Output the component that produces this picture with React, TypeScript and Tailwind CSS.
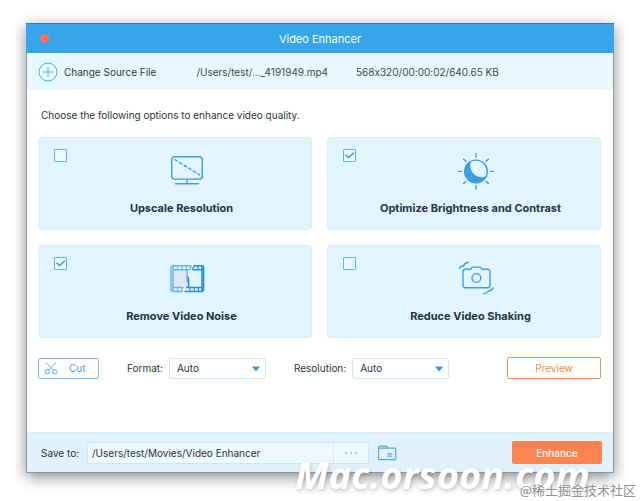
import React, { useState } from 'react';

// ---------------------------------------------------------------------------
// Icons
// ---------------------------------------------------------------------------

const MonitorIcon = () => (
  <svg width="38" height="38" viewBox="0 0 38 38" fill="none" stroke="#3a9fe0" strokeWidth="1.4" strokeLinecap="round">
    <rect x="3.7" y="4.7" width="30.6" height="22.4" rx="2.8" />
    <path d="M7 7.6L31.5 22.8" strokeDasharray="2.6 2.8" />
    <path d="M19 27.2v4.3M7.6 31.7h23" />
  </svg>
);

const BrightnessIcon = () => (
  <svg width="38" height="38" viewBox="0 0 38 38" fill="none" stroke="#3a9fe0" strokeWidth="1.4">
    <circle cx="19" cy="19.4" r="11.3" />
    <path
      d="M13.9 9.4A11.3 11.3 0 1 0 29.2 24.2C25.4 26 20 25.4 16.6 21.8C13.1 18.2 12.5 13.2 13.9 9.4z"
      fill="#3a9fe0"
      stroke="none"
    />
    <path d="M19 1.2v4.2M19 33.2v4.2M1 19.4h4.2M32.8 19.4H37M6.3 6.7l3 3M28.8 29l3 3M31.7 6.7l-3 3M9.2 29l-3 3" />
  </svg>
);

const FilmIcon = () => (
  <svg width="38" height="38" viewBox="0 0 38 38" fill="none">
    <rect x="5" y="9" width="14" height="19" fill="#dde9f4" />
    <g stroke="#6bb3e6" strokeWidth="1.4">
      <path d="M23 5.7H5.2A2.2 2.2 0 0 0 3 7.9v21.4a2.2 2.2 0 0 0 2.2 2.2h9.3M5 9.7h16.5M5 27.5h10.5M5 6v25" />
      <path d="M9.5 5.7v4M14 5.7v4M18.5 5.7v4M9.5 27.5v4M14 27.5v4" strokeWidth="1.1" />
      <path d="M23.4 5.7l-1.8 4M19 9.7v10l.8 3" />
    </g>
    <g stroke="#2190e4" strokeWidth="1.5">
      <path d="M26 5.7h7.4a2.2 2.2 0 0 1 2.2 2.2v21.4a2.2 2.2 0 0 1-2.2 2.2H16.5M24.6 9.7h9.8M18 27.5h16.4M34 6v25" />
      <path d="M26 5.7l-1.4 4M30 5.7v4M22 27.5v4M26.2 27.5v4M30.4 27.5v4" strokeWidth="1.2" />
      <path d="M20.6 27.5v-8.3l-.8-2.6" />
    </g>
  </svg>
);

const CameraIcon = () => (
  <svg width="38" height="38" viewBox="0 0 38 38" fill="none" stroke="#3a9fe0" strokeWidth="1.4" strokeLinecap="round" strokeLinejoin="round">
    <path d="M8.6 9.2h5l1.7-2.1h8l1.7 2.1h5.4a2.6 2.6 0 0 1 2.6 2.6v13.4a2.6 2.6 0 0 1-2.6 2.6H8.6A2.6 2.6 0 0 1 6 25.2V11.8A2.6 2.6 0 0 1 8.6 9.2z" />
    <circle cx="19.4" cy="18" r="4.4" />
    <path d="M2.4 8c1.6-2 2.6-2.1 4-1.9c1.4-2.7 2.8-3.6 5-3.9" />
    <path d="M27 33.7c2.2-.2 3.4-.9 4.4-2.7c2.4-.2 3.5-1.2 4.8-3" />
  </svg>
);

const PlusCircleIcon = () => (
  <svg width="20" height="20" viewBox="0 0 20 20" fill="none" stroke="#4fb3dc" strokeWidth="1">
    <circle cx="10" cy="10" r="9" />
    <path d="M10 5v10M5 10h10" />
  </svg>
);

const ScissorsIcon = () => (
  <svg width="14" height="14" viewBox="0 0 14 14" fill="none" stroke="#5fb2e4" strokeWidth="1">
    <circle cx="3.3" cy="10.7" r="2.2" />
    <circle cx="10.7" cy="10.7" r="2.2" />
    <path d="M1.6 1.4L9.4 8.9M12.4 1.4L4.6 8.9" />
  </svg>
);

const FolderIcon = () => (
  <svg width="20" height="16" viewBox="0 0 20 16" fill="none" stroke="#55aae6" strokeWidth="1.2">
    <path d="M1.6 13.4V2.6a1.4 1.4 0 0 1 1.4-1.4h6.4l1.6 2h6.8a1 1 0 0 1 1 1v9.4a1 1 0 0 1-1 1H2.8a1.2 1.2 0 0 1-1.2-1.2z" />
    <path d="M2 3.2h9M10.2 8.8h5M10.2 11.2h5" />
  </svg>
);

// ---------------------------------------------------------------------------
// Enhancement options
// ---------------------------------------------------------------------------

const OPTIONS: { id: string; title: string; icon: React.ReactNode; checked: boolean }[] = [
  { id: 'upscale',    title: 'Upscale Resolution',               icon: <MonitorIcon />,    checked: false },
  { id: 'brightness', title: 'Optimize Brightness and Contrast', icon: <BrightnessIcon />, checked: true  },
  { id: 'noise',      title: 'Remove Video Noise',               icon: <FilmIcon />,       checked: true  },
  { id: 'shaking',    title: 'Reduce Video Shaking',             icon: <CameraIcon />,     checked: false },
];

function OptionCard({ id, title, icon, checked }: { id: string; title: string; icon: React.ReactNode; checked: boolean }) {
  const [on, setOn] = useState(checked);

  return (
    <label htmlFor={id} className="flex rounded-sm border border-[#d9effb] bg-[#e2f4fe] px-[15px] pt-[11px] pb-[13px]">
      <span className="relative h-[13px] w-[13px] shrink-0">
        <input
          id={id}
          type="checkbox"
          checked={on}
          onChange={(e) => setOn(e.target.checked)}
          className="block h-[13px] w-[13px] appearance-none rounded-[1px] border border-[#62b4e8] bg-[#eef9ff]"
        />
        {on && (
          <svg className="pointer-events-none absolute inset-0" width="13" height="13" viewBox="0 0 13 13" fill="none" stroke="#2f9be0" strokeWidth="1.4">
            <path d="M2.5 5.8l3.1 2.8l5.2-4.8" />
          </svg>
        )}
      </span>
      <span className="flex flex-1 flex-col items-center gap-2.5 pt-[3px]">
        <span className="pl-2.5">{icon}</span>
        <span className="text-[11px] leading-4 font-bold text-[#26343d]">{title}</span>
      </span>
    </label>
  );
}

function AutoSelect({ id, label }: { id: string; label: string }) {
  return (
    <div className="flex items-center gap-1.5">
      <label htmlFor={id}>{label}</label>
      <div className="relative">
        <select
          id={id}
          className="block h-[21px] w-[97px] appearance-none rounded-xs border border-[#cfe9f4] bg-white pl-[7px] text-[10px] text-[#2b3338]"
        >
          <option>Auto</option>
        </select>
        <svg className="pointer-events-none absolute top-2 right-1.5" width="8" height="6" viewBox="0 0 8 6" fill="#2b97dc">
          <path d="M0 .5h8L4 5.5z" />
        </svg>
      </div>
    </div>
  );
}

// ---------------------------------------------------------------------------
// Window
// ---------------------------------------------------------------------------

export default function App() {
  return (
    <div className="relative min-h-screen overflow-hidden bg-white px-[26px] pt-[23px] pb-[29px] font-['Inter','Noto_Sans_CJK_SC',sans-serif] text-[10px] leading-4 text-[#2b3338]">
      <main className="border border-[#8b969c] bg-white shadow-[0_4px_14px_rgba(0,0,0,0.45)]">
        <header className="relative -mx-px -mt-px flex h-[30px] items-center justify-center border-t border-[#44789a] bg-[#38a5ea]">
          <button aria-label="Close" className="absolute left-3.5 h-[9px] w-[9px] rounded-full bg-[#fc7168]" />
          <h1 className="text-[11px] text-white">Video Enhancer</h1>
        </header>

        {/* Source file */}
        <section className="flex h-[37px] items-center bg-[#e9f7fe] pl-[11px]">
          <button className="flex items-center gap-1.5 text-[#2d383e]">
            <PlusCircleIcon />
            Change Source File
          </button>
          <span className="ml-10 text-[#3c4a51]">/Users/test/..._4191949.mp4</span>
          <span className="ml-7 text-[#3c4a51] [font-feature-settings:'calt'_0]">568x320/00:00:02/640.65 KB</span>
        </section>

        {/* Options */}
        <section className="pr-3 pl-[11px]">
          <p className="px-[3px] pt-[17px] pb-3.5">Choose the following options to enhance video quality.</p>
          <div className="grid grid-cols-2 gap-[15px]">
            {OPTIONS.map((option) => (
              <OptionCard key={option.id} {...option} />
            ))}
          </div>

          <div className="flex items-center pt-[19px] pb-[53px]">
            <button className="flex h-[21px] w-[61px] items-center gap-[11px] rounded-xs border border-[#7fc0ea] pl-[5px] text-[#45a5e4]">
              <ScissorsIcon />
              Cut
            </button>
            <div className="flex gap-7 pl-7">
              <AutoSelect id="format" label="Format:" />
              <AutoSelect id="resolution" label="Resolution:" />
            </div>
            <button className="ml-auto h-[22px] w-[94px] rounded-xs border border-[#f5924f] text-[#f2893f]">
              Preview
            </button>
          </div>
        </section>

        {/* Output */}
        <footer className="flex h-10 items-center border-t border-[#d6ecf8] bg-[#e2f2fd] pr-[11px] pl-3.5">
          <label htmlFor="save-to" className="mr-2">Save to:</label>
          <div className="flex h-[22px] w-[282px] rounded-xs border border-[#cde7f5] bg-[#edf8ff]">
            <input
              id="save-to"
              type="text"
              defaultValue="/Users/test/Movies/Video Enhancer"
              className="min-w-0 flex-1 bg-transparent px-1 outline-none"
            />
            <button aria-label="Browse" className="flex w-[35px] items-center justify-center border-l border-[#dcedf7]">
              <svg width="14" height="4" viewBox="0 0 14 4" fill="#3e98d4">
                <circle cx="2" cy="2" r=".8" />
                <circle cx="7" cy="2" r=".8" />
                <circle cx="12" cy="2" r=".8" />
              </svg>
            </button>
          </div>
          <button aria-label="Open folder" className="ml-2">
            <FolderIcon />
          </button>
          <button className="ml-auto h-[23px] w-[90px] rounded-xs bg-[#fc8450] font-medium text-white">
            Enhance
          </button>
        </footer>
      </main>

      {/* Site marks over the bottom edge */}
      <span className="pointer-events-none absolute right-[50px] bottom-2 font-['Noto_Sans',sans-serif] text-[38px] leading-10 font-bold text-white italic [text-shadow:1px_2px_4px_rgba(0,0,0,0.2)]">
        Mac.orsoon.com
      </span>
      <span className="pointer-events-none absolute right-1 bottom-1 font-['Noto_Sans_CJK_SC',sans-serif] text-[13px] leading-4 text-[#8f9295] [text-shadow:0_0_2px_#fff]">
        @稀土掘金技术社区
      </span>
    </div>
  );
}
